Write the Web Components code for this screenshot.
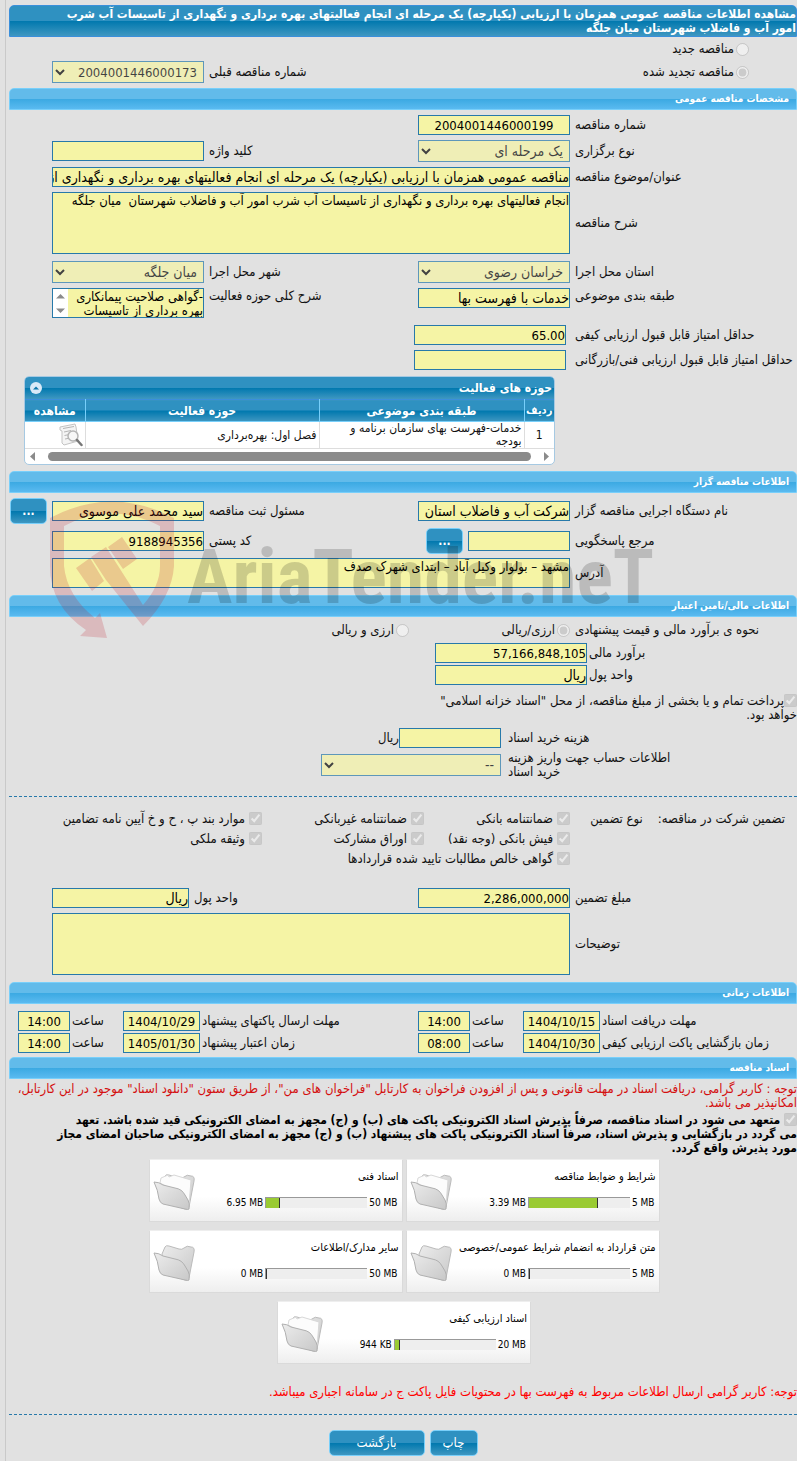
<!DOCTYPE html>
<html lang="fa" dir="rtl">
<head>
<meta charset="utf-8">
<meta name="viewport" content="width=device-width, initial-scale=1">
<title>مشاهده اطلاعات مناقصه عمومی</title>
<style>
  body {
    margin: 0;
    background: #e1e1e1;
    color: #111;
    font: 13px/14px "DejaVu Sans Condensed", "DejaVu Sans", sans-serif;
  }
</style>
</head>
<body>

<tender-page>
  <section-bar tone="dark">مشاهده اطلاعات مناقصه عمومی همزمان با ارزیابی (یکپارچه) یک مرحله ای انجام فعالیتهای بهره برداری و نگهداری از تاسیسات آب شرب<br>امور آب و فاضلاب شهرستان میان جلگه</section-bar>
  <form-panel class="first">
    <form-row kind="pair"><choice-box type="radio" name="tender" indent>مناقصه جدید</choice-box></form-row>
    <form-row kind="pair">
      <choice-box type="radio" name="tender" checked indent>مناقصه تجدید شده</choice-box>
      <form-field kind="select" label="شماره مناقصه قبلی" value="2004001446000173"></form-field>
    </form-row>
  </form-panel>

  <section-bar>مشخصات مناقصه عمومی</section-bar>
  <form-panel>
    <form-row kind="pair"><form-field label="شماره مناقصه" value="2004001446000199" center></form-field></form-row>
    <form-row kind="pair">
      <form-field kind="select" label="نوع برگزاری" value="یک مرحله ای"></form-field>
      <form-field label="کلید واژه"></form-field>
    </form-row>
    <form-row kind="wide"><form-field label="عنوان/موضوع مناقصه" value="مناقصه عمومی همزمان با ارزیابی (یکپارچه) یک مرحله ای انجام فعالیتهای بهره برداری و نگهداری از تاسیسات آب شرب"></form-field></form-row>
    <form-row kind="wide" class="tall"><form-field kind="area" size="large" label="شرح مناقصه" value="انجام فعالیتهای بهره برداری و نگهداری از تاسیسات آب شرب امور آب و فاضلاب شهرستان  میان جلگه"></form-field></form-row>
    <form-row kind="pair">
      <form-field kind="select" label="استان محل اجرا" value="خراسان رضوی"></form-field>
      <form-field kind="select" label="شهر محل اجرا" value="میان جلگه"></form-field>
    </form-row>
    <form-row kind="pair" top>
      <form-field label="طبقه بندی موضوعی" value="خدمات با فهرست بها"></form-field>
      <form-field kind="area" scroll label="شرح کلی حوزه فعالیت" value="-گواهی صلاحیت پیمانکاری بهره برداری از تاسیسات"></form-field>
    </form-row>
    <form-row kind="score"><form-field label="حداقل امتیاز قابل قبول ارزیابی کیفی" value="65.00"></form-field></form-row>
    <form-row kind="score"><form-field label="حداقل امتیاز قابل قبول ارزیابی فنی/بازرگانی"></form-field></form-row>
    <activity-grid></activity-grid>
  </form-panel>

  <section-bar>اطلاعات مناقصه گزار</section-bar>
  <form-panel class="org">
    <form-row kind="owner">
      <form-field label="نام دستگاه اجرایی مناقصه گزار" value="شرکت آب و فاضلاب استان"></form-field>
      <form-field label="مسئول ثبت مناقصه" value="سید محمد علی موسوی"></form-field>
      <action-button small>...</action-button>
    </form-row>
    <form-row kind="contact">
      <form-field label="مرجع پاسخگویی"></form-field>
      <action-button small>...</action-button>
      <form-field label="کد پستی" value="9188945356"></form-field>
    </form-row>
    <form-row kind="wide"><form-field kind="area" label="آدرس" value="مشهد – بولوار وکیل آباد – ابتدای شهرک صدف"></form-field></form-row>
    <water-mark></water-mark>
  </form-panel>

  <section-bar>اطلاعات مالی/تامین اعتبار</section-bar>
  <form-panel class="finance">
    <form-row kind="currency">
      <span>نحوه ی برآورد مالی و قیمت پیشنهادی</span>
      <choice-box type="radio" name="currency" checked>ارزی/ریالی</choice-box>
      <choice-box type="radio" name="currency">ارزی و ریالی</choice-box>
    </form-row>
    <form-row kind="money"><form-field label="برآورد مالی" value="57,166,848,105"></form-field></form-row>
    <form-row kind="money"><form-field label="واحد پول" value="ریال"></form-field></form-row>
    <choice-box type="checkbox" checked wrap class="treasury">پرداخت تمام و یا بخشی از مبلغ مناقصه، از محل "اسناد خزانه اسلامی" خواهد بود.</choice-box>
    <form-row kind="cost"><form-field label="هزینه خرید اسناد" unit="ریال"></form-field></form-row>
    <form-row kind="cost"><form-field kind="select" label="اطلاعات حساب جهت واریز هزینه خرید اسناد" value="--"></form-field></form-row>
  </form-panel>

  <rule-line></rule-line>
  <form-panel class="guarantee">
    <form-row kind="checks">
      <span class="lead"><span>تضمین شرکت در مناقصه:</span><span>نوع تضمین</span></span>
      <choice-box type="checkbox" checked>ضمانتنامه بانکی</choice-box>
      <choice-box type="checkbox" checked>ضمانتنامه غیربانکی</choice-box>
      <choice-box type="checkbox" checked>موارد بند پ ، ح و خ آیین نامه تضامین</choice-box>
      <span></span>
      <choice-box type="checkbox" checked>فیش بانکی (وجه نقد)</choice-box>
      <choice-box type="checkbox" checked>اوراق مشارکت</choice-box>
      <choice-box type="checkbox" checked>وثیقه ملکی</choice-box>
      <span></span>
      <choice-box type="checkbox" checked class="long">گواهی خالص مطالبات تایید شده قراردادها</choice-box>
    </form-row>
    <form-row kind="amount">
      <form-field label="مبلغ تضمین" value="2,286,000,000"></form-field>
      <form-field label="واحد پول" value="ریال"></form-field>
    </form-row>
    <form-row kind="wide"><form-field kind="area" size="large" label="توضیحات"></form-field></form-row>
  </form-panel>

  <section-bar>اطلاعات زمانی</section-bar>
  <form-panel class="dates">
    <form-row kind="dates">
      <form-field center label="مهلت دریافت اسناد" value="1404/10/15"></form-field>
      <form-field center label="ساعت" value="14:00"></form-field>
      <form-field center label="مهلت ارسال پاکتهای پیشنهاد" value="1404/10/29"></form-field>
      <form-field center label="ساعت" value="14:00"></form-field>
    </form-row>
    <form-row kind="dates">
      <form-field center label="زمان بازگشایی پاکت ارزیابی کیفی" value="1404/10/30"></form-field>
      <form-field center label="ساعت" value="08:00"></form-field>
      <form-field center label="زمان اعتبار پیشنهاد" value="1405/01/30"></form-field>
      <form-field center label="ساعت" value="14:00"></form-field>
    </form-row>
  </form-panel>

  <section-bar>اسناد مناقصه</section-bar>
  <note-text>توجه : کاربر گرامی، دریافت اسناد در مهلت قانونی و پس از افزودن فراخوان به کارتابل "فراخوان های من"، از طریق ستون "دانلود اسناد" موجود در این کارتابل، امکانپذیر می باشد.</note-text>
  <choice-box type="checkbox" checked wrap strong> متعهد می شود در اسناد مناقصه، صرفاً پذیرش اسناد الکترونیکی پاکت های (ب) و (ج) مجهز به امضای الکترونیکی قید شده باشد. تعهد<br>می گردد در بازگشایی و پذیرش اسناد، صرفاً اسناد الکترونیکی پاکت های پیشنهاد (ب) و (ج) مجهز به امضای الکترونیکی صاحبان امضای مجاز<br>مورد پذیرش واقع گردد.</choice-box>
  <file-list>
    <file-tile label="شرایط و ضوابط مناقصه" used="3.39 MB" limit="5 MB" percent="68" full></file-tile>
    <file-tile label="اسناد فنی" used="6.95 MB" limit="50 MB" percent="14" full></file-tile>
    <file-tile label="متن قرارداد به انضمام شرایط عمومی/خصوصی" used="0 MB" limit="5 MB" percent="0"></file-tile>
    <file-tile label="سایر مدارک/اطلاعات" used="0 MB" limit="50 MB" percent="0"></file-tile>
    <file-tile label="اسناد ارزیابی کیفی" used="944 KB" limit="20 MB" percent="5" full></file-tile>
  </file-list>
  <note-text bright>توجه: کاربر گرامی ارسال اطلاعات مربوط به فهرست بها در محتویات فایل پاکت ج در سامانه اجباری میباشد.</note-text>
  <rule-line></rule-line>
  <button-bar>
    <action-button>چاپ</action-button>
    <action-button wide>بازگشت</action-button>
  </button-bar>
</tender-page>

<script>
  const DARK = 'linear-gradient(#2f91c1 0 50%, #0078ae 50%, #3f97c1)';
  const SKY = 'linear-gradient(#62bbea 0 50%, #3ba9e2 50%, #5abaf0)';

  /** Base class: opens the shadow root and fills it with the element's markup */
  class BaseElement extends HTMLElement {
    constructor() {
      super();
      this.attachShadow({ mode: 'open' });
    }

    connectedCallback() {
      this.shadowRoot.innerHTML = this.render();
    }

    attr(name) {
      return (this.getAttribute(name) || '').replace(/"/g, '&quot;');
    }
  }

  customElements.define('tender-page', class extends BaseElement {
    render() {
      return `
        <style>
          :host {
            display: block; box-sizing: border-box; min-height: 100vh; margin-left: 5px;
            padding: 5px 0 5px 3px; border-left: 1px solid #c9c9c9;
          }
        </style>
        <slot></slot>`;
    }
  });

  customElements.define('section-bar', class extends BaseElement {
    render() {
      return `
        <style>
          :host {
            display: block; box-sizing: border-box; padding: 3px 7px; color: #fff; font-size: 10px; font-weight: bold;
            border: 1px solid #78cffa; border-radius: 5px 5px 0 0; background: ${SKY};
          }
          :host([tone=dark]) { padding: 1px 0; font-size: 12px; border-color: #3a8fdb; background: ${DARK}; }
        </style>
        <slot></slot>`;
    }
  });

  customElements.define('form-panel', class extends BaseElement {
    render() {
      return `
        <style>
          :host { display: flex; flex-direction: column; gap: 5px; padding: 5px 0 6px; position: relative; }
          :host(.first) { gap: 3px; padding: 3px 0 5px; }
          :host(.org) { gap: 4px; padding: 5px 0 7px; }
          :host(.finance) { gap: 2px; padding: 2px 0 16px; }
          :host(.guarantee) { padding: 12px 0 7px; }
          :host(.dates) { gap: 2px; padding: 7px 0 4px; }
          ::slotted(.treasury) { max-width: 364px; padding: 7px 0 4px; }
          ::slotted(.tall) { padding-bottom: 2px; }
        </style>
        <slot></slot>`;
    }
  });

  /** One line of the form. Fields are display: contents, so their label and cell land in this grid */
  customElements.define('form-row', class extends BaseElement {
    render() {
      return `
        <style>
          :host { display: grid; align-items: center; column-gap: 5px; padding-left: 43px; min-height: 18px; }
          :host([kind=pair]) { grid-template-columns: 222px 152px 1fr 152px; }
          :host([kind=wide]) { grid-template-columns: 222px 1fr; }
          :host([kind=score]) { grid-template-columns: 222px 152px; column-gap: 9px; }
          :host([kind=owner]) { grid-template-columns: 222px 152px 1fr 152px 38px; padding-left: 0; }
          :host([kind=contact]) { grid-template-columns: 222px 102px 37px 1fr 152px; }
          :host([kind=currency]) { grid-template-columns: 222px 156px 1fr; min-height: 22px; }
          :host([kind=money]) { grid-template-columns: 208px 152px; column-gap: 2px; }
          :host([kind=cost]) { grid-template-columns: 289px 180px; column-gap: 7px; --label-pad: 115px; margin-bottom: 1px; }
          :host([kind=checks]) { grid-template-columns: 227px 146px 162px 1fr; grid-auto-rows: 20px; column-gap: 0; padding-left: 0; margin-bottom: 14px; }
          :host([kind=amount]) { grid-template-columns: 222px 152px 1fr 137px; }
          :host([kind=dates]) { grid-template-columns: 195px 77px 49px 52px 1fr 77px 49px 52px; column-gap: 2px; padding-left: 9px; }
          :host([top]) { align-items: start; min-height: 32px; --label-top: 1px; }
          ::slotted([indent]) { grid-column: span 2; padding-right: 48px; }
          ::slotted(span) { text-align: left; }
          ::slotted(.lead) { display: flex; gap: 15px; padding-right: 12px; }
          ::slotted(.long) { grid-column: span 2; }
        </style>
        <slot></slot>`;
    }
  });

  customElements.define('form-field', class extends BaseElement {
    control() {
      const value = this.attr('value');
      const numeric = /^[\d,.:/]+$/.test(value) ? 'class="number"' : '';
      switch (this.getAttribute('kind')) {
        case 'select': return `<select id="c" ${numeric} disabled><option>${value}</option></select>`;
        case 'area': return `<textarea id="c" readonly>${value}</textarea>`;
        default: return `<input id="c" ${numeric} type="text" readonly value="${value}">`;
      }
    }

    // up and down arrows of the short scrolling text box
    scroller() {
      if (!this.hasAttribute('scroll')) return '';
      return `
        <svg width="15" height="28" aria-hidden="true">
          <path d="M3 9.500h9L7.500 5zM3 19.500h9L7.500 24z" fill="#8b8b8b"/>
        </svg>`;
    }

    render() {
      return `
        <style>
          :host { display: contents; }
          label { text-align: left; padding: var(--label-top, 0) var(--label-pad, 0) 0 0; }
          .cell { display: flex; align-items: center; min-width: 0; }
          input, select, textarea {
            flex: 1; min-width: 0; box-sizing: border-box; margin: 0; padding: 0; height: 20px; color: #000;
            font-family: inherit; font-size: 14px; border: 1px solid #2779aa; border-radius: 0; background: #f5f4a5;
          }
          select { height: 22px; padding: 0 2px; }
          textarea { height: 30px; resize: none; overflow: hidden; font-size: 13px; line-height: 14px; padding: 1px 0; }
          .number { font-size: 13px; }
          :host([size=large]) textarea { height: 62px; }
          :host([scroll]) .cell { border: 1px solid #2779aa; background: #fff; }
          :host([scroll]) textarea { height: 28px; border: 0; }
          :host([center]) input { text-align: center; }
          :host([unit]) input { flex: 0 0 102px; }
        </style>
        <label for="c">${this.attr('label')}</label>
        <div class="cell">${this.control()}${this.scroller()}${this.attr('unit')}</div>`;
    }
  });

  customElements.define('choice-box', class extends BaseElement {
    render() {
      const type = this.attr('type');
      const checked = this.hasAttribute('checked') ? 'checked' : '';
      return `
        <style>
          :host { display: block; }
          label { display: flex; align-items: center; gap: 4px; }
          input { margin: 0; width: 13px; height: 13px; flex: none; }
          input[type=radio] { margin-left: -2px; }
          input[type=checkbox] { margin-top: -2px; }
          :host([wrap]) label { display: block; }
          :host([wrap]) input { vertical-align: -2px; }
          :host([strong]) { font-weight: bold; font-size: 12px; color: #000; }
        </style>
        <label><input type="${type}" disabled ${checked}><slot></slot></label>`;
    }
  });

  customElements.define('action-button', class extends BaseElement {
    render() {
      return `
        <style>
          :host { display: block; }
          button {
            display: block; width: 48px; height: 26px; padding: 0; color: #fff; font: inherit;
            border: 1px solid #78cffa; border-radius: 5px; background: ${DARK};
          }
          :host([wide]) button { width: 96px; }
          :host([small]) button { width: 37px; font-size: 12px; font-weight: bold; }
        </style>
        <button type="button"><slot></slot></button>`;
    }
  });

  customElements.define('activity-grid', class extends BaseElement {
    render() {
      return `
        <style>
          :host {
            display: block; box-sizing: border-box; max-width: 531px; margin: 1px 242px 0 15px; overflow: hidden;
            border: 1px solid #a6c9e2; border-radius: 5px; background: #fff;
          }
          header {
            display: flex; justify-content: space-between; align-items: center; height: 22px; padding: 0 2px 0 5px;
            color: #fff; font-size: 12px; font-weight: bold; background: ${DARK};
          }
          header button { width: 12px; height: 12px; padding: 0; border: 0; background: none; }
          svg { display: block; }
          table { width: 100%; border-collapse: collapse; table-layout: fixed; }
          th {
            height: 21px; padding: 0; color: #fff; font-size: 12px; border-left: 1px solid #78cffa;
            border-top: 1px solid #3a8fdb; border-bottom: 1px solid #78cffa; background: ${DARK};
          }
          td { height: 26px; padding: 0 2px; font-size: 12px; line-height: 13px; border-left: 1px solid #ddd; border-bottom: 1px solid #ddd; }
          th:last-child, td:last-child { border-left: 0; }
          th:first-child { font-size: 11px; }
          td:first-child { text-align: center; }
          .bar { display: flex; align-items: center; gap: 13px; height: 15px; padding: 0 5px; }
          .bar i { flex: 1; height: 9px; border-radius: 5px; background: #8b8b8b; }
        </style>
        <header>حوزه های فعالیت
          <button type="button" aria-label="بستن">
            <svg width="12" height="12"><circle cx="6" cy="6" r="6" fill="#d9e9f7"/><path d="M3 7.500 6 4.500l3 3z" fill="#0b76ab"/></svg>
          </button>
        </header>
        <table>
          <colgroup><col style="width:30px"><col style="width:205px"><col><col style="width:60px"></colgroup>
          <thead><tr><th>ردیف</th><th>طبقه بندی موضوعی</th><th>حوزه فعالیت</th><th>مشاهده</th></tr></thead>
          <tbody><tr>
            <td>1</td><td>خدمات-فهرست بهای سازمان برنامه و بودجه</td><td>فصل اول: بهره‌برداری</td>
            <td>
              <svg width="24" height="24" viewBox="0 0 24 24" fill="none">
                <path d="M1 4 16 1l1 3 2 14-14 4-2-2L3 8 1 7z" fill="#f4f4f4" stroke="#c4c4c4"/>
                <path d="M4 5.500 15 3.500M5 9l7-1.500M5.500 12.500l5-1M6 16l5-1" stroke="#b5b5b5"/>
                <circle cx="14" cy="13" r="5" fill="#f7f7f7" fill-opacity=".9" stroke="#b5b5b5" stroke-width="1.500"/>
                <path d="m18 17 4.500 5" stroke="#777" stroke-width="2.500" stroke-linecap="round"/>
              </svg>
            </td>
          </tr></tbody>
        </table>
        <div class="bar" aria-hidden="true">
          <svg width="5" height="9"><path d="M0 0v9l5-4.500z" fill="#8b8b8b"/></svg><i></i>
          <svg width="5" height="9"><path d="M5 0v9L0 4.500z" fill="#8b8b8b"/></svg>
        </div>`;
    }
  });

  customElements.define('water-mark', class extends BaseElement {
    render() {
      return `
        <style>
          :host { position: absolute; left: 41px; top: 5px; pointer-events: none; }
          svg { display: block; overflow: visible; }
          text { font: bold 76px "Liberation Sans Narrow", "Roboto Condensed", "Liberation Sans", sans-serif; }
        </style>
        <svg width="602" height="142" viewBox="50 497 602 142" direction="ltr" aria-hidden="true">
          <g fill="#be1e2d" fill-opacity=".2">
            <path d="M50 517Q112 484 174 517V565Q172 596 143 625L106 579 91 556 106 546 143 604Q160 585 160 565V525Q112 500 64 525V565Q67 595 95 617L100 612 107 637 80 635 86 629Q50 605 50 565Z"/>
            <path d="M76 567 90 557 104 580 92 590ZM108 546 122 536 137 558 123 568Z"/>
          </g>
          <text x="187" y="602" fill="#000" fill-opacity=".17">AriaTender.neT</text>
        </svg>`;
    }
  });

  customElements.define('rule-line', class extends BaseElement {
    render() {
      return `<style>:host { display: block; border-top: 1px dashed #2779aa; }</style>`;
    }
  });

  customElements.define('note-text', class extends BaseElement {
    render() {
      return `
        <style>
          :host { display: block; padding: 3px 0; color: #d40f0f; }
          :host([bright]) { padding: 21px 0 15px; color: #f00; }
        </style>
        <slot></slot>`;
    }
  });

  customElements.define('file-list', class extends BaseElement {
    render() {
      return `
        <style>
          :host { display: flex; flex-wrap: wrap; justify-content: center; gap: 8px 3px; padding: 4px 128px 0 130px; }
        </style>
        <slot></slot>`;
    }
  });

  customElements.define('file-tile', class extends BaseElement {
    render() {
      const paper = this.hasAttribute('full')
        ? '<path d="m7 11 1-5 7-3 1 2 5-2 17 5-2 26-12-14z" fill="#fcfcfc" stroke="#d8d8d8"/>' : '';
      return `
        <style>
          :host {
            display: flex; box-sizing: border-box; width: 254px; height: 63px; color: #000; font-size: 11px;
            border: 1px solid #dadada; border-top-color: #eee; background: linear-gradient(#fff 60%, #eee);
          }
          .info { flex: 1; display: flex; flex-direction: column; gap: 12px; padding: 10px 3px 0 0; white-space: nowrap; }
          .size { display: flex; align-items: center; gap: 2px; height: 13px; padding-right: 1px; font-size: 10px; }
          .size span { direction: ltr; }
          .track { width: 102px; height: 11px; box-sizing: border-box; direction: ltr; border: 0 solid #999; border-width: 1px 0 0 1px; background: #eee; }
          .track i { display: block; box-sizing: border-box; height: 100%; width: ${this.attr('percent')}%; min-width: 1px; border-right: 1px solid #333; background: #9acb33; }
          svg { flex: none; margin: 12px 0 0 3px; }
        </style>
        <div class="info">
          <div>${this.attr('label')}</div>
          <div class="size"><span>${this.attr('limit')}</span><div class="track"><i></i></div><span>${this.attr('used')}</span></div>
        </div>
        <svg width="44" height="40" viewBox="0 0 44 40">
          <defs><linearGradient id="g" x2="1" y2="1"><stop stop-color="#ececec"/><stop offset="1" stop-color="#c8c8c8"/></linearGradient></defs>
          <path d="M9 11 12 4q1-2 4-1l10 3q3 1 5-1 3-3 7-1 4 0 3 5l-5 26q-1 3-4 2L12 30z" fill="url(#g)" stroke="#bbb"/>
          ${paper}
          <path d="M1 10q5 0 9 3l12 3q7 1 10 7l3 5q2 3 1 9-1 1-4 0L10 32q-3-1-4-5-1-9-5-17z" fill="url(#g)" stroke="#b0b0b0"/>
        </svg>`;
    }
  });

  customElements.define('button-bar', class extends BaseElement {
    render() {
      return `
        <style>:host { display: flex; justify-content: center; gap: 5px; padding-top: 15px; }</style>
        <slot></slot>`;
    }
  });
</script>
</body>
</html>
